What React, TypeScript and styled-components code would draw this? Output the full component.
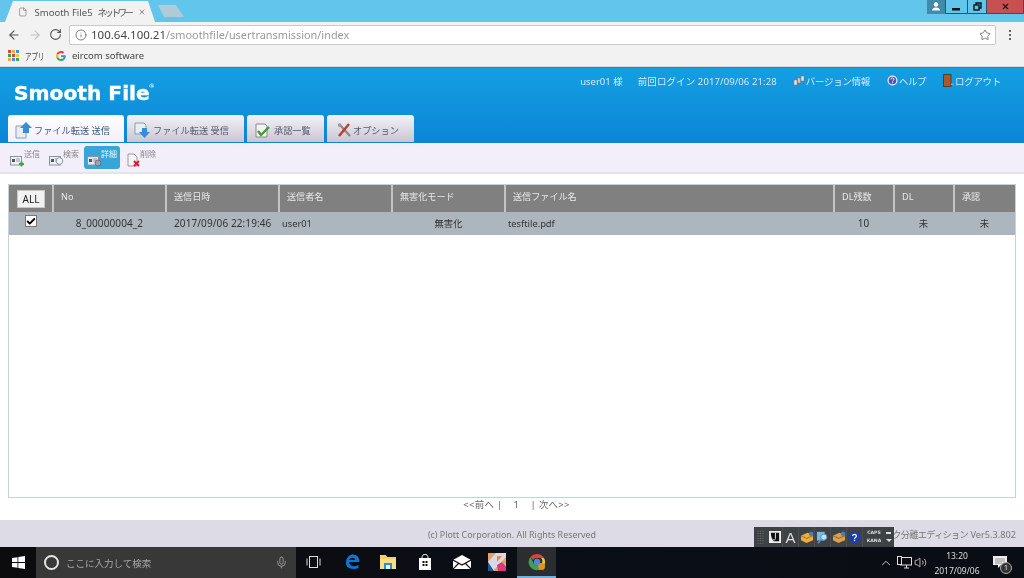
import React from "react";
import styled, { createGlobalStyle } from "styled-components";
import { ArrowLeft, ArrowRight, RotateCw, Info, Star, X, ChevronUp, Volume2, File, Mic, Check } from "lucide-react";

const Global = createGlobalStyle`
  html, body { margin: 0; padding: 0; width: 1024px; height: 578px; overflow: hidden; background: #fff; }
  * { box-sizing: border-box; }
  #root { width: 1024px; height: 578px; }
`;
const font = `"Noto Sans", "Noto Sans CJK JP", sans-serif`;

const Page = styled.div`
  position: relative; width: 1024px; height: 578px; display: flex; flex-direction: column;
  font-family: ${font}; font-size: 10px; color: #444; overflow: hidden; filter: blur(0.3px);
`;

/* browser chrome */
const TitleBar = styled.div`
  height: 22px; flex: none; background: #62c6ec; display: flex; align-items: flex-start; padding-left: 5px;
`;
const BrowserTab = styled.div`
  width: 150px; height: 22px; background: #f2f2f2; display: flex; align-items: center;
  padding: 1px 9px 0 13px; gap: 7px; clip-path: polygon(0 100%, 8px 1px, 143px 1px, 100% 100%);
  font-size: 9.5px; color: #555; white-space: pre;
`;
const TabTitle = styled.span` flex: 1; `;
const Condensed = styled.span<{ $sp?: number }>` letter-spacing: ${p => p.$sp ?? -2.8}px; `;
const GhostTab = styled.div`
  width: 26px; height: 12px; margin: 5px 0 0 3px; background: #aecbd6;
  clip-path: polygon(0 0, 18px 0, 100% 100%, 6px 100%);
`;
const WinControls = styled.div` margin-left: auto; display: flex; align-items: flex-start; `;
const WinBtn = styled.div<{ $w: number; $bg: string; $plain?: boolean }>`
  width: ${p => p.$w}px; height: 14px; background: ${p => p.$bg}; display: flex; align-items: center; justify-content: center;
  border-bottom: 1px solid ${p => p.$plain ? p.$bg : "#35505e"}; border-right: 1px solid #35505e; color: #111;
`;
const Toolbar = styled.div`
  height: 23px; flex: none; background: #f2f2f2; display: flex; align-items: center; padding: 2px 10px 0 7px;
  color: #555;
`;
const NavIcons = styled.div` display: flex; align-items: center; gap: 7px; width: 62px; `;
const Omnibox = styled.div`
  width: 927px; height: 20px; background: #fff; border: 1px solid #c9c9c9; border-radius: 2px;
  display: flex; align-items: center; padding: 0 4px 0 5px; gap: 4px; font-size: 10.9px; color: #999;
`;
const Host = styled.span` color: #444; font-size: 11.5px; `;
const Path = styled.span` flex: 1; `;
const Kebab = styled.div`
  margin-left: 13px; display: flex; flex-direction: column; gap: 2px;
  & > i { display: block; width: 2px; height: 2px; background: #666; }
`;
const Bookmarks = styled.div`
  height: 22px; flex: none; background: #f2f2f2; display: flex; align-items: center; padding: 0 0 0 8px;
  font-size: 9.5px; color: #444; border-bottom: 1px solid #d8d8d8; white-space: nowrap;
`;
const BookLabel = styled.span<{ $w: number }>`
  width: ${p => p.$w}px; padding-left: 6px;
  & > b { display: inline-block; font-weight: 400; transform: scaleX(.68); transform-origin: left; }
`;

/* app header */
const Header = styled.header`
  height: 76px; flex: none; background: linear-gradient(#149fe2, #0b86d6); display: flex; flex-direction: column;
  border-top: 1px solid #0f8fd6;
`;
const HeaderTop = styled.div` height: 47px; display: flex; align-items: flex-start; justify-content: space-between; `;
const Logo = styled.div`
  margin: 13px 0 0 14px; font-family: "DejaVu Sans", sans-serif; font-weight: 700; font-size: 20.2px; line-height: 24px;
  color: #fff; -webkit-text-stroke: 0.4px #fff; white-space: nowrap;
  & sup { font-size: 6px; font-weight: 400; vertical-align: top; line-height: 10px; -webkit-text-stroke: 0; margin-left: -1px; }
`;
const UserNav = styled.nav`
  display: flex; align-items: center; margin: 6px 23px 0 0; color: #d3e9f7; font-size: 9.5px; height: 13px; white-space: nowrap;
`;
const NavItem = styled.span<{ $ml: number; $sp?: number }>`
  margin-left: ${p => p.$ml}px; display: flex; align-items: center; gap: 1px; letter-spacing: ${p => p.$sp ?? 0}px;
`;
const Tabs = styled.div` height: 27px; display: flex; align-items: flex-end; padding-left: 8px; gap: 3px; `;
const AppTab = styled.div<{ $w: number; $active?: boolean; $pl: number; $gap: number }>`
  width: ${p => p.$w}px; height: 27px; border-radius: 3px 3px 0 0; display: flex; align-items: center; gap: ${p => p.$gap}px; padding: 3px 0 0 ${p => p.$pl}px;
  font-size: 9.2px; color: ${p => p.$active ? "#3c5a78" : "#555a70"}; white-space: nowrap;
  background: ${p => p.$active ? "linear-gradient(#ffffff, #f3effb)" : "linear-gradient(#f4f2f8, #c9c6d2)"};
`;

/* sub toolbar */
const SubBar = styled.div`
  height: 31px; flex: none; background: #f3effa; border-bottom: 2px solid #e6e4ea; display: flex; align-items: center; padding: 0 0 1px 9px; 
`;
const Tool = styled.div<{ $w: number; $ml?: number; $active?: boolean }>`
  width: ${p => p.$w}px; height: 23px; margin-left: ${p => p.$ml ?? 0}px; display: flex; align-items: flex-start; gap: 0;
  border-radius: 3px; padding: ${p => p.$active ? "3px 0 0 3px" : "3px 0 0 1px"};
  background: ${p => p.$active ? "#38a5d9" : "transparent"}; color: ${p => p.$active ? "#e8f6fc" : "#888"};
  font-size: 8px; line-height: 10px;
  & svg { margin: 4px -1px 0 0; flex: none; }
`;

/* main */
const Main = styled.main` flex: 1; min-height: 0; display: flex; flex-direction: column; padding: 10px 8px 0 8px; background: #fff; `;
const TableBox = styled.div` height: 314px; flex: none; border: 1px solid #c6d2d8; display: flex; flex-direction: column; width: 1008px; `;
const columns = "43px 113px 113px 113px 113px 329px 60px 60px 62px";
const HeadRow = styled.div` display: grid; grid-template-columns: ${columns}; height: 27px; background: #808080; `;
const HeadCell = styled.div`
  border-left: 2px solid #c4c4c4; color: #e8e8e8; padding: 5px 0 0 7px; font-size: 9.1px; line-height: 13px; white-space: nowrap;
`;
const AllCell = styled.div` display: flex; align-items: center; padding: 1px 0 0 8px; `;
const AllButton = styled.button`
  width: 28px; height: 18px; padding: 0; background: #f2f2f2; border: 1px solid #c8c8c8; color: #222;
  font-family: ${font}; font-size: 10px; line-height: 14px;
`;
const DataRow = styled.div` display: grid; grid-template-columns: ${columns}; height: 23px; padding-bottom: 2px; background: #adb5bd; color: #333; align-items: center; font-size: 9.3px; `;
const DataCell = styled.div<{ $align?: string; $pl?: number; $num?: boolean }>`
  text-align: ${p => p.$align ?? "left"}; padding-left: ${p => p.$pl ?? 0}px; white-space: nowrap;
  ${p => p.$num ? "font-size: 10px; letter-spacing: 0.1px;" : "padding-top: 1px;"}
`;
const CheckMark = styled.span`
  display: flex; width: 12px; height: 12px; margin: -4px 0 0 16px; background: #fff; border: 1px solid #777; align-items: center; justify-content: center; color: #000;
`;
const Pager = styled.div`
  height: 23px; flex: none; display: flex; justify-content: center; align-items: flex-start; font-size: 9.5px; line-height: 14px; color: #666;
  white-space: pre; letter-spacing: .3px; padding-left: 9px;
`;

const Footer = styled.footer`
  height: 27px; flex: none; background: #dddbe6; display: grid; grid-template-columns: 1fr auto 1fr; align-items: center; color: #777; font-size: 8.9px; white-space: nowrap; padding-top: 1px;
`;
const FootRight = styled.div` justify-self: end; padding-right: 8px; font-size: 9.2px; `;

/* taskbar */
const Taskbar = styled.div`
  height: 31px; flex: none; background: linear-gradient(90deg, #0c0c0e, #0a0e16 60%, #0a0d13); display: flex; align-items: stretch; color: #ccc;
`;
const StartBtn = styled.div` width: 36px; display: flex; align-items: center; justify-content: center; `;
const SearchBox = styled.div`
  width: 260px; background: #383838; display: flex; align-items: center; padding: 0 8px; font-size: 9.5px; color: #a8a8a8; gap: 7px;
`;
const Ring = styled.span` width: 15px; height: 15px; border: 2px solid #e4e4e4; border-radius: 50%; flex: none; `;
const SearchText = styled.span` flex: 1; `;
const TaskIcon = styled.div<{ $w: number; $active?: boolean }>`
  width: ${p => p.$w}px; display: flex; align-items: center; justify-content: center;
  background: ${p => p.$active ? "#2b2d31" : "transparent"};
  border-bottom: 2px solid ${p => p.$active ? "#6fb0dc" : "transparent"};
`;
const Tray = styled.div` margin-left: auto; display: flex; align-items: center; padding-right: 17px; color: #ddd; `;
const TrayNet = styled.span` width: 18px; margin: 0 1px 0 2px; display: flex; justify-content: center; `;
const Clock = styled.div` width: 50px; margin: 0 0 0 5px; text-align: center; font-size: 8.5px; line-height: 15px; color: #ddd; `;
const NoteWrap = styled.div` position: relative; margin-left: 11px; display: flex; `;
const NoteBadge = styled.span`
  position: absolute; right: -5px; bottom: -5px; width: 12px; height: 12px; border-radius: 50%; background: #333; border: 1px solid #aaa;
  color: #eee; font-size: 7px; line-height: 10px; text-align: center;
`;

/* floating IME bar */
const ImeBar = styled.div`
  position: absolute; left: 754px; top: 527px; width: 140px; height: 20px; background: #3f4245; display: flex; align-items: center; padding-left: 3px; color: #ddd;
`;
const Grip = styled.span`
  width: 7px; height: 14px; margin-right: 3px; flex: none;
  background-image: radial-gradient(#7a7a7a 0.7px, transparent 0.8px); background-size: 2.4px 2.4px;
`;
const ImeSlot = styled.span`
  width: 16px; height: 20px; display: flex; align-items: center; justify-content: center; flex: none; font-size: 15px; font-family: "Liberation Sans", sans-serif; color: #ddd;
  border-right: 1px solid #4c4f52;
`;
const ImeLabels = styled.span`
  width: 20px; margin-left: 1px; display: flex; flex-direction: column; align-items: center; font-family: "DejaVu Sans", sans-serif; font-size: 4.6px; line-height: 8px; color: #ddd; font-weight: 700;
`;
const ImeArrows = styled.span`
  display: flex; flex-direction: column; align-items: center; gap: 5px; width: 9px;
  & > i:first-child { width: 5px; height: 1.5px; background: #ddd; }
  & > i:last-child { width: 0; height: 0; border-left: 3px solid transparent; border-right: 3px solid transparent; border-top: 3px solid #ddd; }
`;

const Apps = () => (
  <svg width="11" height="11" viewBox="0 0 11 11">
    {["#e0433a","#f2a93b","#3f8fe8","#3aa655","#e0433a","#f2c53b","#f2a93b","#3f8fe8","#3aa655"].map((c, i) => (
      <rect key={i} x={(i % 3) * 4} y={Math.floor(i / 3) * 4} width="3" height="3" fill={c} />
    ))}
  </svg>
);
const GoogleG = () => (
  <svg width="10" height="10" viewBox="0 0 48 48">
    <path fill="#EA4335" d="M24 9.5c3.5 0 6.6 1.2 9.1 3.6l6.8-6.8C35.8 2.4 30.3 0 24 0 14.6 0 6.5 5.4 2.6 13.2l7.9 6.2C12.4 13.7 17.7 9.5 24 9.5z" />
    <path fill="#4285F4" d="M47 24.5c0-1.6-.2-3.1-.4-4.5H24v9h13c-.6 3-2.2 5.500-4.800 7.200l7.700 6C44.400 38 47 31.900 47 24.500z" />
    <path fill="#FBBC05" d="M10.500 28.600A14.500 14.500 0 0 1 10.500 19.400l-7.900-6.200a24 24 0 0 0 0 21.600l7.900-6.200z" />
    <path fill="#34A853" d="M24 48c6.500 0 11.900-2.100 15.900-5.800l-7.700-6c-2.200 1.500-4.900 2.300-8.200 2.300-6.300 0-11.600-4.200-13.500-9.900l-7.900 6.200C6.500 42.600 14.600 48 24 48z" />
  </svg>
);
const Person = () => (
  <svg width="10" height="9" viewBox="0 0 10 9"><circle cx="5" cy="2.500" r="2.200" fill="#fff" /><path d="M1 8.500c0-2 2-3 4-3s4 1 4 3z" fill="#fff" /></svg>
);
const Minimize = () => <svg width="9" height="8" viewBox="0 0 9 8"><rect x="0" y="5" width="8" height="2.500" fill="#111" /></svg>;
const Restore = () => (
  <svg width="9" height="9" viewBox="0 0 9 9" fill="none" stroke="#111" strokeWidth="1.400"><rect x="1" y="3" width="5" height="5" /><path d="M3 3V1h5v5H6" /></svg>
);

type IconKind = "send" | "search" | "detail" | "delete";
const ToolIcon = ({ kind }: { kind: IconKind }) => (
  <svg width="15" height="14" viewBox="0 0 15 14">
    {kind === "delete" ? (
      <>
        <path d="M2 1h6l3 3v9H2z" fill="#f4f4f4" stroke="#9a9a9a" />
        <path d="M8 8l5 5M13 8l-5 5" stroke="#d02030" strokeWidth="2" />
      </>
    ) : (
      <>
        <rect x="0.500" y="3.500" width="11" height="8.500" fill={kind === "detail" ? "#dfe8ee" : "#eef2f4"} stroke="#8a949a" />
        <rect x="2" y="6" width="3" height="3" fill="#556" />
        <path d="M6 6h4M6 8h4" stroke="#99a" />
        {kind === "send" && <path d="M9 11h5M11.500 8.500v5" stroke="#39a845" strokeWidth="2" />}
        {kind === "search" && <circle cx="10.500" cy="8" r="3.300" fill="#eef6fa" stroke="#8a9aa4" />}
        {kind === "detail" && <circle cx="11" cy="10" r="3" fill="#9aa4aa" stroke="#667" strokeWidth="0.800" />}
      </>
    )}
  </svg>
);
const SendTabIcon = () => (
  <svg width="18" height="17" viewBox="0 0 18 17">
    <path d="M1 4h8l2 2v10H1z" fill="#e8eef4" stroke="#8aa0b0" />
    <path d="M8 11V6H5l6-6 6 6h-3v5z" fill="#3b8cd0" />
  </svg>
);
const RecvTabIcon = () => (
  <svg width="18" height="17" viewBox="0 0 18 17">
    <path d="M1 1h9l2 2v9H1z" fill="#e8eef4" stroke="#8aa0b0" />
    <path d="M8 6h5v4h3l-5.500 6L5 10h3z" fill="#3b8cd0" />
  </svg>
);
const ApproveTabIcon = () => (
  <svg width="16" height="15" viewBox="0 0 16 15">
    <path d="M1 1h9l2 2v11H1z" fill="#f2f2f2" stroke="#8a8a8a" />
    <path d="M3 8l3 4 8-8" fill="none" stroke="#3aa035" strokeWidth="2.400" />
  </svg>
);
const OptionTabIcon = () => (
  <svg width="14" height="15" viewBox="0 0 14 15">
    <path d="M2 1l11 12" stroke="#888" strokeWidth="2.200" />
    <path d="M12 1L2 13" stroke="#c0392b" strokeWidth="2.400" />
    <circle cx="2.500" cy="2" r="1.800" fill="#999" />
  </svg>
);
const VersionIcon = () => (
  <svg width="11" height="11" viewBox="0 0 11 11">
    <rect x="0" y="5" width="3" height="5" fill="#e4e4e4" stroke="#777" strokeWidth=".5" />
    <rect x="3.500" y="3" width="3" height="5" fill="#d8c8a8" stroke="#777" strokeWidth=".5" />
    <rect x="7" y="1" width="3" height="5" fill="#e4e4e4" stroke="#777" strokeWidth=".5" />
  </svg>
);
const HelpIcon = () => (
  <svg width="11" height="11" viewBox="0 0 11 11">
    <circle cx="5.500" cy="5.500" r="5" fill="#f0f0ff" />
    <circle cx="5.500" cy="5.500" r="3.800" fill="#4a4fc0" />
    <path d="M4 4.500c0-2 3-2 3 0 0 1-1.500 1-1.500 2" stroke="#fff" fill="none" />
    <rect x="5" y="7.300" width="1" height="1" fill="#fff" />
  </svg>
);
const DoorIcon = () => (
  <svg width="11" height="13" viewBox="0 0 11 13">
    <rect x="0.500" y="0.500" width="7.500" height="12" fill="#a85a28" stroke="#5a3a2a" />
    <rect x="8" y="9.500" width="3" height="1.500" fill="#68a8e0" />
  </svg>
);
const WinLogo = () => (
  <svg width="13" height="13" viewBox="0 0 13 13" fill="#fff">
    <path d="M0 2l5.500-.8V6H0zM6.300 1L13 0v6H6.300zM0 7h5.500v4.800L0 11zM6.300 7H13v6l-6.700-1z" />
  </svg>
);
const TaskView = () => (
  <svg width="15" height="12" viewBox="0 0 15 12" fill="none" stroke="#ddd"><rect x="3.500" y="0.500" width="8" height="11" /><path d="M1 2.500v7M14 2.500v7" /></svg>
);
const Edge = () => (
  <svg width="17" height="17" viewBox="0 0 17 17" fill="none">
    <path d="M2 10C2 4 6 1.500 9 1.500c4 0 6.500 3 6.500 7.500H5c0 4 5 5.500 9.500 3v3c-5 2-12.500 1-12.500-5z" fill="#0a78d8" />
    <path d="M5.200 7h6c0-3-5.300-3-6 0z" fill="#0c0e14" />
  </svg>
);
const Explorer = () => (
  <svg width="16" height="15" viewBox="0 0 16 15">
    <path d="M0 1h6l1 2h9v12H0z" fill="#f4cf6a" />
    <rect x="0" y="5" width="16" height="10" fill="#f8de8a" />
    <rect x="4" y="9" width="8" height="6" fill="#2f8fc8" />
    <rect x="6" y="11" width="4" height="4" fill="#dff" />
  </svg>
);
const Store = () => (
  <svg width="14" height="16" viewBox="0 0 14 16">
    <path d="M1 4h12v12H1z" fill="#fff" />
    <path d="M4 4c0-5 6-5 6 0" fill="none" stroke="#fff" />
    <path d="M4.500 7h2v2h-2zM7.500 7h2v2h-2zM4.500 10h2v2h-2zM7.500 10h2v2h-2z" fill="#111" />
  </svg>
);
const Mail = () => (
  <svg width="18" height="14" viewBox="0 0 18 14">
    <path d="M0 5L9 0l9 5v9H0z" fill="#fff" />
    <path d="M0 5l9 5 9-5M0 14l6-6M18 14l-6-6" stroke="#111" fill="none" strokeWidth="1.200" />
  </svg>
);
const AppSquare = () => (
  <svg width="18" height="18" viewBox="0 0 18 18">
    <rect width="18" height="18" fill="#e8a060" />
    <path d="M0 18V9L8 0h10v4L5 18z" fill="#d8d8e8" />
    <path d="M0 9l6 9H0z" fill="#1c5a90" />
    <path d="M9 12l5-3 4 5v4H10z" fill="#d83a80" />
    <path d="M9 3l5 0-5 6z" fill="#e88a40" />
  </svg>
);
const Chrome = () => (
  <svg width="18" height="18" viewBox="0 0 18 18">
    <path d="M9 1a8 8 0 0 1 7 4H9a4 4 0 0 0-4 2L2.500 4A8 8 0 0 1 9 1z" fill="#d8453a" />
    <path d="M16 5a8 8 0 0 1-6 12l3-6a4 4 0 0 0 0-6z" fill="#f0c030" />
    <path d="M10 17a8 8 0 0 1-7.500-13L5 9a4 4 0 0 0 5 3z" fill="#3fa050" />
    <circle cx="9" cy="9" r="3.200" fill="#4a88e0" />
    <circle cx="13.500" cy="13.500" r="3.500" fill="#d89820" />
  </svg>
);
const Network = () => (
  <svg width="15" height="13" viewBox="0 0 15 13" fill="none" stroke="#ddd"><rect x="3.500" y="1.500" width="11" height="7.500" /><rect x="0.500" y="0.500" width="4" height="8" fill="#0a0d13" /><path d="M7 12h5M9.500 9v3" /></svg>
);
const Note = () => (
  <svg width="14" height="13" viewBox="0 0 14 13"><path d="M0 0h14v9H8l-3 3V9H0z" fill="#eee" /><path d="M2 3h10M2 5h10M2 7h7" stroke="#555" strokeWidth=".6" /></svg>
);
const ImeJ = () => <svg width="12" height="12" viewBox="0 0 13 13"><rect width="13" height="13" fill="#eee" /><path d="M2 2h9v9H5C3 9 2 6 2 2z" fill="#111" /><path d="M7 2v6c0 2-2 2-3 1" stroke="#eee" fill="none" /></svg>;
const ImeBox = ({ a, b }: { a: string; b: string }) => (
  <svg width="14" height="13" viewBox="0 0 15 14"><path d="M1 5l7-3 6 2v6l-7 3-6-3z" fill={a} /><path d="M1 5l6 3 7-3" stroke={b} fill="none" /><circle cx="12" cy="3" r="2.500" fill="#3a80c8" /></svg>
);
const ImeTool = () => <svg width="14" height="13" viewBox="0 0 16 15"><rect x="1" y="1" width="9" height="10" fill="#7cb8e0" /><circle cx="9" cy="7" r="3.500" fill="#bfe0f4" stroke="#4a90c0" /><path d="M6 10l-4 4" stroke="#4a90c0" strokeWidth="2" /></svg>;
const ImeHelp = () => <svg width="13" height="13" viewBox="0 0 14 14"><circle cx="7" cy="7" r="6.500" fill="#1c3cb0" /><path d="M5 5.500c0-2.500 4-2.500 4 0 0 1.500-2 1.300-2 3" stroke="#fff" fill="none" strokeWidth="1.300" /><rect x="6.300" y="9.500" width="1.400" height="1.400" fill="#fff" /></svg>;

const heads = ["No", "送信日時", "送信者名", "無害化モード", "送信ファイル名", "DL残数", "DL", "承認"];

export default function App() {
  return (
    <Page>
      <Global />
      <TitleBar>
        <BrowserTab>
          <File size={12} strokeWidth={1.4} color="#666" />
          <TabTitle>Smooth File5  <Condensed>ネットワー</Condensed></TabTitle>
          <X size={10} strokeWidth={2} color="#555" />
        </BrowserTab>
        <GhostTab />
        <WinControls>
          <WinBtn $w={19} $bg="#3f8ba8" $plain><Person /></WinBtn>
          <WinBtn $w={22} $bg="#62c6ec"><Minimize /></WinBtn>
          <WinBtn $w={19} $bg="#62c6ec"><Restore /></WinBtn>
          <WinBtn $w={37} $bg="#c75050"><X size={9} strokeWidth={3} /></WinBtn>
        </WinControls>
      </TitleBar>
      <Toolbar>
        <NavIcons>
          <ArrowLeft size={14} strokeWidth={2} color="#555" />
          <ArrowRight size={14} strokeWidth={2} color="#c4c4c4" />
          <RotateCw size={13} strokeWidth={2} color="#555" />
        </NavIcons>
        <Omnibox>
          <Info size={12} strokeWidth={1.500} color="#555" />
          <Path><Host>100.64.100.21</Host>/smoothfile/usertransmission/index</Path>
          <Star size={12} strokeWidth={1.500} color="#555" />
        </Omnibox>
        <Kebab><i /><i /><i /></Kebab>
      </Toolbar>
      <Bookmarks>
        <Apps />
        <BookLabel $w={37}><b>アプリ</b></BookLabel>
        <GoogleG />
        <BookLabel $w={90}>eircom software</BookLabel>
      </Bookmarks>
      <Header>
        <HeaderTop>
          <Logo>Smooth File<sup>®</sup></Logo>
          <UserNav>
            <span>user01 様</span>
            <NavItem $ml={15} $sp={0.1}>前回ログイン 2017/09/06 21:28</NavItem>
            <NavItem $ml={17} $sp={-0.3}><VersionIcon />バージョン情報</NavItem>
            <NavItem $ml={17} $sp={-0.5}><HelpIcon />ヘルプ</NavItem>
            <NavItem $ml={17} $sp={-0.3}><DoorIcon />ログアウト</NavItem>
          </UserNav>
        </HeaderTop>
        <Tabs>
          <AppTab $w={116} $active $pl={7} $gap={1}><SendTabIcon />ファイル転送 送信</AppTab>
          <AppTab $w={117} $pl={7} $gap={1}><RecvTabIcon />ファイル転送 受信</AppTab>
          <AppTab $w={77} $pl={8} $gap={3}><ApproveTabIcon />承認一覧</AppTab>
          <AppTab $w={87} $pl={10} $gap={2}><OptionTabIcon />オプション</AppTab>
        </Tabs>
      </Header>
      <SubBar>
        <Tool $w={39}><ToolIcon kind="send" />送信</Tool>
        <Tool $w={36}><ToolIcon kind="search" />検索</Tool>
        <Tool $w={36} $active><ToolIcon kind="detail" />詳細</Tool>
        <Tool $w={34} $ml={5}><ToolIcon kind="delete" />削除</Tool>
      </SubBar>
      <Main>
        <TableBox>
          <HeadRow>
            <AllCell><AllButton>ALL</AllButton></AllCell>
            {heads.map(h => <HeadCell key={h}>{h}</HeadCell>)}
          </HeadRow>
          <DataRow>
            <DataCell><CheckMark><Check size={11} strokeWidth={4.5} /></CheckMark></DataCell>
            <DataCell $align="center" $pl={2} $num>8_00000004_2</DataCell>
            <DataCell $pl={9} $num>2017/09/06 22:19:46</DataCell>
            <DataCell $pl={4}>user01</DataCell>
            <DataCell $align="center" $pl={2}>無害化</DataCell>
            <DataCell $pl={4}>tesftile.pdf</DataCell>
            <DataCell $align="center" $pl={1} $num>10</DataCell>
            <DataCell $align="center" $pl={1}>未</DataCell>
            <DataCell $align="center" $pl={1}>未</DataCell>
          </DataRow>
        </TableBox>
        <Pager>{"<<前へ |    1    | 次へ>>"}</Pager>
      </Main>
      <Footer>
        <span />
        <span>(c) Plott Corporation. All Rights Reserved</span>
        <FootRight><Condensed $sp={-0.7}>ク分離エディション</Condensed> Ver5.3.802</FootRight>
      </Footer>
      <Taskbar>
        <StartBtn><WinLogo /></StartBtn>
        <SearchBox>
          <Ring />
          <SearchText>ここに入力して検索</SearchText>
          <Mic size={13} strokeWidth={1.500} color="#aaa" />
        </SearchBox>
        <TaskIcon $w={34}><TaskView /></TaskIcon>
        <TaskIcon $w={44}><Edge /></TaskIcon>
        <TaskIcon $w={28}><Explorer /></TaskIcon>
        <TaskIcon $w={46}><Store /></TaskIcon>
        <TaskIcon $w={28}><Mail /></TaskIcon>
        <TaskIcon $w={41}><AppSquare /></TaskIcon>
        <TaskIcon $w={39} $active><Chrome /></TaskIcon>
        <Tray>
          <ChevronUp size={14} strokeWidth={1.500} />
          <TrayNet><Network /></TrayNet>
          <Volume2 size={13} strokeWidth={1.500} />
          <Clock>13:20<br />2017/09/06</Clock>
          <NoteWrap><Note /><NoteBadge>1</NoteBadge></NoteWrap>
        </Tray>
      </Taskbar>
      <ImeBar>
        <Grip />
        <ImeSlot><ImeJ /></ImeSlot>
        <ImeSlot>A</ImeSlot>
        <ImeSlot><ImeBox a="#e8b040" b="#a06820" /></ImeSlot>
        <ImeSlot><ImeTool /></ImeSlot>
        <ImeSlot><ImeBox a="#d8a050" b="#906020" /></ImeSlot>
        <ImeSlot><ImeHelp /></ImeSlot>
        <ImeLabels><span>CAPS</span><span>KANA</span></ImeLabels>
        <ImeArrows><i /><i /></ImeArrows>
      </ImeBar>
    </Page>
  );
}
